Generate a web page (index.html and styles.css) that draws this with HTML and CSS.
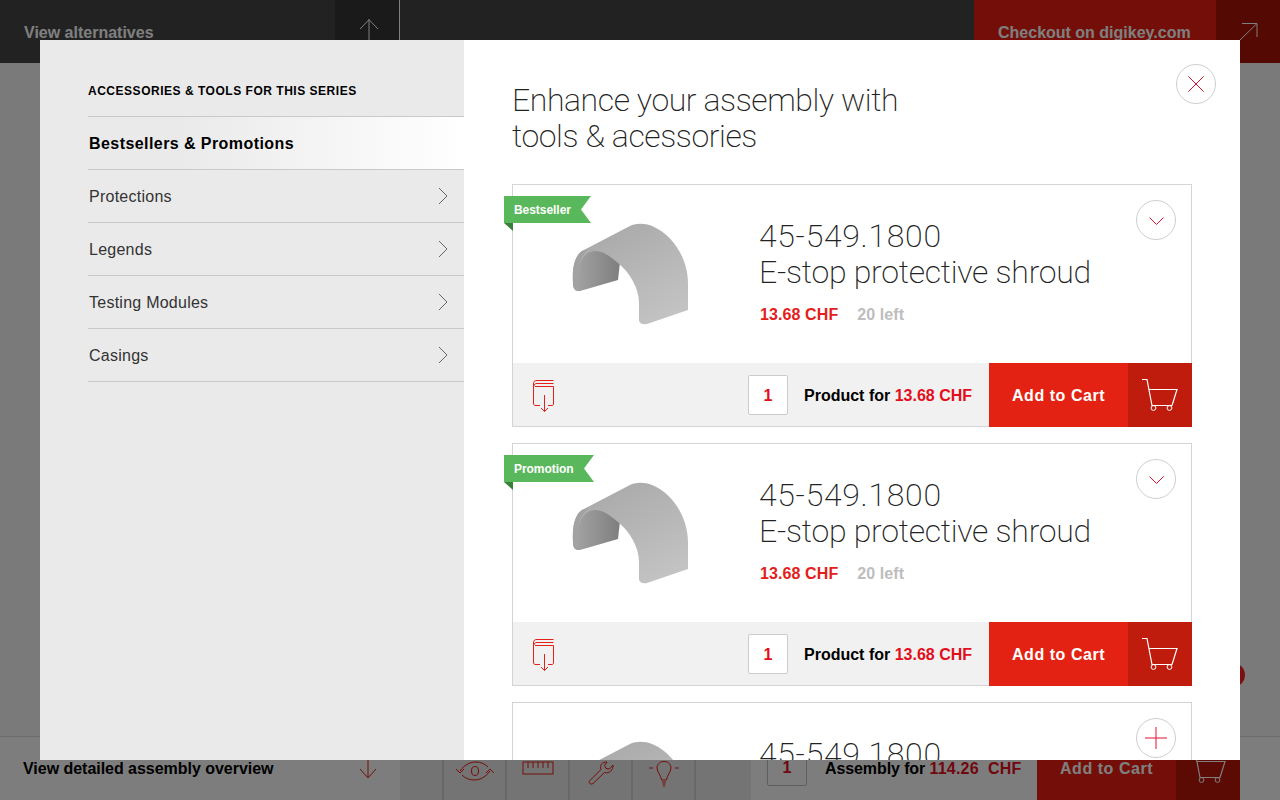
FILE: index.html
```html
<!DOCTYPE html>
<html lang="en">
<head>
<meta charset="utf-8">
<title>Accessories</title>
<link rel="stylesheet" href="styles.css">
</head>
<body>
<svg class="defs" width="0" height="0" aria-hidden="true">
  <defs>
    <linearGradient id="body" x1="0.2" y1="0" x2="0.8" y2="1">
      <stop offset="0" stop-color="#a8a8a8"/><stop offset="1" stop-color="#c4c4c4"/>
    </linearGradient>
    <linearGradient id="inner" x1="0" y1="0" x2="1" y2="0">
      <stop offset="0" stop-color="#a2a2a2"/><stop offset="1" stop-color="#7e7e7e"/>
    </linearGradient>
    <symbol id="shroud" viewBox="0 0 140 125">
      <path fill="url(#inner)" d="M18 81C14 60 20 40 36 38C44 38 52 44 60 52L58 70L20 81Z"/>
      <path fill="url(#body)" d="M13 74C12 56 15 46 22 41L68 17C75 13 84 13 92 16C114 25 128 50 128 73V100L87 114C82 115 79 113 79 110V93C79 78 70 63 58 53C50 46 43 41 35 41C26 41 19 50 18 62V81C15 81 13 78 13 74Z"/>
      <path fill="#a2a2a2" d="M13 74C12 56 15 46 22 41L30 38C24 42 19 50 18 62V81C15 81 13 78 13 74Z"/>
    </symbol>
    <symbol id="cart" viewBox="0 0 38 34">
      <path fill="none" stroke="currentColor" stroke-width="1.200" d="M1 1.500H6L11 27.500H31M7.500 11.500H36L31 27.500"/>
      <circle cx="12.500" cy="30" r="2.400" fill="none" stroke="currentColor"/>
      <circle cx="28.500" cy="30" r="2.400" fill="none" stroke="currentColor"/>
    </symbol>
    <symbol id="book" viewBox="0 0 24 34">
      <path fill="none" stroke="currentColor" stroke-width="1" d="M21.500 0.500H5C2 0.500 1.500 2 1.500 4V23C1.500 25 2 25.500 4 25.500H8M21.500 3.500H5C3 3.500 2 4.500 2 6M21.500 6.500H3M21.500 6.500V24C21.500 25 21 25.500 19 25.500H16M12.500 15V31.500M9 28L12.500 31.500L16 28"/>
    </symbol>
    <symbol id="chev-right" viewBox="0 0 10 18">
      <path fill="none" stroke="currentColor" stroke-width="1" d="M1 1L9 9L1 17"/>
    </symbol>
  </defs>
</svg>

<div class="page">
  <header class="topbar">
    <div class="top-label">View alternatives</div>
    <div class="top-arrow">
      <svg width="20" height="30" viewBox="0 0 20 30"><path fill="none" stroke="#fff" d="M10 0V30M1 10L10 0.700L19 10"/></svg>
    </div>
    <div class="top-gap"></div>
    <div class="checkout">Checkout on digikey.com</div>
    <div class="checkout-arrow">
      <svg width="20" height="20" viewBox="0 0 20 20"><path fill="none" stroke="#fff" d="M1 18L18 1.500M3 1.500H18V15"/></svg>
    </div>
  </header>
  <main class="canvas">
    <span class="canvas-dot"></span>
  </main>
  <footer class="bottombar">
    <div class="bottom-label">View detailed assembly overview</div>
    <div class="bottom-arrow">
      <svg width="18" height="20" viewBox="0 0 18 20"><path fill="none" stroke="#e61c10" d="M9 0V19M1 10L9 19L17 10"/></svg>
    </div>
    <div class="tools">
      <div class="tool tool-blank"></div>
      <div class="tool">
        <svg width="40" height="20" viewBox="0 0 40 20"><g fill="none" stroke="#e61c10"><path d="M5 10C10 3 16 1 21 1C26 1 30 3 33 6M35 10C30 17 24 19 19 19C14 19 10 17 7 14"/><path d="M1 8L5 12L9 8M31 12L35 8L39 12"/><ellipse cx="20" cy="10" rx="3.500" ry="4.500"/></g></svg>
      </div>
      <div class="tool">
        <svg width="32" height="14" viewBox="0 0 32 14"><g fill="none" stroke="#e61c10"><rect x="1" y="1" width="30" height="12"/><path d="M6 1V7M11 1V7M16 1V7M21 1V7M26 1V7"/></g></svg>
      </div>
      <div class="tool">
        <svg width="26" height="24" viewBox="0 0 26 24"><path fill="none" stroke="#e61c10" d="M1.500 20L13 8.500C11.500 4 14 1 19 1L16.500 4.500L18 7.500L21.500 8L25 4C25.500 9 21 13 16.500 11.500L5 22.500C3 24 0 22 1.500 20Z"/></svg>
      </div>
      <div class="tool">
        <svg width="30" height="26" viewBox="0 0 30 26"><path fill="none" stroke="#e61c10" d="M0 7H4M26 7H30M15 0.500C10 0.500 8 4 8 7C8 11 12 14 12.500 19H17.500C18 14 22 11 22 7C22 4 20 0.500 15 0.500ZM13 21H17M13.500 23H16.500M14 25H16"/></svg>
      </div>
      <div class="tool tool-blank"></div>
    </div>
    <div class="bottom-total">
      <div class="qty qty-dim">1</div>
      <div class="total-text">Assembly for <span class="red">114.26&nbsp; CHF</span></div>
    </div>
    <div class="bottom-add">Add to Cart</div>
    <div class="bottom-cart"><svg class="cart-dim" width="38" height="34"><use href="#cart"/></svg></div>
    <div class="bottom-end"></div>
  </footer>
</div>

<div class="scrim"></div>

<section class="modal">
  <aside class="side">
    <h2 class="side-title">ACCESSORIES &amp; TOOLS FOR THIS SERIES</h2>
    <ul class="menu">
      <li class="menu-item active">Bestsellers &amp; Promotions</li>
      <li class="menu-item">Protections<svg class="menu-chev" width="10" height="18"><use href="#chev-right"/></svg></li>
      <li class="menu-item">Legends<svg class="menu-chev" width="10" height="18"><use href="#chev-right"/></svg></li>
      <li class="menu-item">Testing Modules<svg class="menu-chev" width="10" height="18"><use href="#chev-right"/></svg></li>
      <li class="menu-item">Casings<svg class="menu-chev" width="10" height="18"><use href="#chev-right"/></svg></li>
    </ul>
  </aside>
  <div class="content">
    <button class="round close" aria-label="Close">
      <svg width="16" height="16" viewBox="0 0 16 16"><path fill="none" stroke="#e8112d" d="M0.500 0.500L15.500 15.500M15.500 0.500L0.500 15.500"/></svg>
    </button>
    <h1 class="headline">Enhance your assembly with<br>tools &amp; acessories</h1>

    <article class="card">
      <div class="badge">Bestseller</div>
      <span class="fold"></span>
      <button class="round toggle" aria-label="Expand">
        <svg width="16" height="10" viewBox="0 0 16 10"><path fill="none" stroke="#e8112d" d="M1.500 2.500L8.500 9.500L15.500 2.500"/></svg>
      </button>
      <div class="card-main">
        <svg class="shot" width="140" height="125"><use href="#shroud"/></svg>
        <div class="info">
          <div class="title"><span class="part">45-549.1800</span><br><span class="name">E-stop protective shroud</span></div>
          <div class="meta"><span class="price">13.68 CHF</span><span class="stock">20 left</span></div>
        </div>
      </div>
      <div class="card-bar">
        <svg class="book" width="24" height="34"><use href="#book"/></svg>
        <div class="qty">1</div>
        <div class="total-text">Product for <span class="red">13.68 CHF</span></div>
        <div class="add">Add to Cart</div>
        <div class="add-cart"><svg width="38" height="34"><use href="#cart"/></svg></div>
      </div>
    </article>

    <article class="card">
      <div class="badge badge-wide">Promotion</div>
      <span class="fold"></span>
      <button class="round toggle" aria-label="Expand">
        <svg width="16" height="10" viewBox="0 0 16 10"><path fill="none" stroke="#e8112d" d="M1.500 2.500L8.500 9.500L15.500 2.500"/></svg>
      </button>
      <div class="card-main">
        <svg class="shot" width="140" height="125"><use href="#shroud"/></svg>
        <div class="info">
          <div class="title"><span class="part">45-549.1800</span><br><span class="name">E-stop protective shroud</span></div>
          <div class="meta"><span class="price">13.68 CHF</span><span class="stock">20 left</span></div>
        </div>
      </div>
      <div class="card-bar">
        <svg class="book" width="24" height="34"><use href="#book"/></svg>
        <div class="qty">1</div>
        <div class="total-text">Product for <span class="red">13.68 CHF</span></div>
        <div class="add">Add to Cart</div>
        <div class="add-cart"><svg width="38" height="34"><use href="#cart"/></svg></div>
      </div>
    </article>

    <article class="card">
      <button class="round toggle" aria-label="Add">
        <svg width="22" height="22" viewBox="0 0 22 22"><path fill="none" stroke="#e8112d" d="M11 0V22M0 11H22"/></svg>
      </button>
      <div class="card-main">
        <svg class="shot" width="140" height="125"><use href="#shroud"/></svg>
        <div class="info">
          <div class="title"><span class="part">45-549.1800</span><br><span class="name">E-stop protective shroud</span></div>
          <div class="meta"><span class="price">13.68 CHF</span><span class="stock">20 left</span></div>
        </div>
      </div>
    </article>
  </div>
</section>
</body>
</html>
```
FILE: styles.css
```css
* { box-sizing: border-box; }
html, body { margin: 0; height: 100%; overflow: hidden; }
body { font-family: "Liberation Sans", Arial, sans-serif; color: #000; background: #f4f4f4; }
.defs { position: absolute; }
.page { height: 800px; display: flex; flex-direction: column; }

.topbar { height: 63px; display: flex; background: #444; color: #fff; font-weight: 700; font-size: 16px; }
.top-label { width: 335px; padding: 24px 0 0 24px; line-height: 18px; }
.top-arrow { width: 65px; background: #343434; border-right: 1px solid #fff; padding: 19px 0 0 24px; }
.top-gap { flex: 1; }
.checkout { width: 242px; background: #e61c10; padding: 24px 0 0 24px; line-height: 18px; }
.checkout-arrow { width: 64px; background: #a81207; padding: 22px 0 0 23px; }

.canvas { flex: 1; position: relative; }
.canvas-dot { position: absolute; left: 1221px; top: 600px; width: 24px; height: 24px; border-radius: 50%; background: #f82020; }

.bottombar { height: 64px; display: flex; background: #fafafa; border-top: 1px solid #d8d8d8; }
.bottom-label { width: 335px; padding: 23px 0 0 23px; font-weight: 700; font-size: 16px; line-height: 18px; letter-spacing: -.03px; }
.bottom-arrow { width: 65px; padding: 22px 0 0 24px; }
.tools { width: 351px; display: flex; background: #e8e8e8; }
.tool { width: 63px; border-right: 2px solid #d0d0d0; display: flex; justify-content: center; padding-top: 24px; align-items: flex-start; }
.tool:first-child { width: 44px; }
.tool:last-child { width: 54px; border-right: 0; }
.bottom-total { width: 286px; display: flex; align-items: flex-start; padding: 9px 0 0 16px; }
.qty { width: 40px; height: 40px; border: 1px solid #ccc; border-radius: 2px; background: #fff; color: #e30e1c; font-weight: 700; font-size: 16px; line-height: 40px; text-align: center; flex: none; }
.qty-dim { background: transparent; border-color: #bdbdbd; line-height: 42px; }
.total-text { font-weight: 700; font-size: 16px; line-height: 18px; white-space: nowrap; margin: 2px 0 0 16px; }
.bottom-total .total-text { margin: 14px 0 0 18px; letter-spacing: -.1px; }
.bottom-total .red { letter-spacing: .2px; }
.red { color: #e30e1c; }
.bottom-add { width: 139px; background: #e61c10; color: #fff; font-weight: 700; font-size: 16px; letter-spacing: .55px; padding: 23px 0 0 23px; line-height: 18px; }
.bottom-cart { width: 64px; background: #b81408; color: #fff; padding: 13px 0 0 13px; }
.cart-dim { overflow: hidden; }
.bottom-end { flex: 1; }

.scrim { position: absolute; inset: 0; background: rgba(0,0,0,.5); }

.modal { position: absolute; left: 40px; top: 40px; width: 1200px; height: 720px; display: flex; background: #fff; overflow: hidden; }
.side { width: 424px; flex: none; background: #eaeaea; padding: 44px 0 0 48px; }
.side-title { margin: 0 0 18px; font-size: 12px; line-height: 14px; font-weight: 700; letter-spacing: .52px; color: #000; }
.menu { margin: 0; padding: 0; list-style: none; border-top: 1px solid #c9c9c9; }
.menu-item { height: 53px; border-bottom: 1px solid #c9c9c9; padding: 2px 16px 0 1px; display: flex; align-items: center; justify-content: space-between; font-size: 16px; letter-spacing: .25px; color: #333; }
.menu-item.active { font-weight: 700; color: #000; background: linear-gradient(90deg, #eaeaea 25%, #fff 100%); letter-spacing: .43px; }
.menu-chev { color: #666; margin-top: -2px; }

.content { flex: 1; padding: 42px 48px 0; position: relative; min-width: 0; }
.round { position: absolute; width: 40px; height: 40px; padding: 0; border: 1px solid #cfcfcf; border-radius: 50%; background: #fff; display: flex; align-items: center; justify-content: center; }
.close { right: 24px; top: 24px; }
.toggle { right: 15px; top: 15px; }
.headline, .title { font-family: Roboto, "Liberation Sans", sans-serif; font-weight: 200; font-size: 32px; line-height: 36px; color: #222; }
.headline { margin: 0 0 30px; letter-spacing: -.42px; }
.part { letter-spacing: .7px; }
.name { letter-spacing: -.26px; }

.card { position: relative; border: 1px solid #d4d4d4; margin-bottom: 16px; height: 243px; background: #fff; }
.badge { position: absolute; left: -9px; top: 11px; height: 27px; width: 87px; padding-left: 10px; line-height: 28px; font-size: 12px; letter-spacing: -.05px; font-weight: 700; color: #fff; background: #5ab85c; clip-path: polygon(0 0, 100% 0, calc(100% - 10px) 50%, 100% 100%, 0 100%); }
.badge-wide { width: 90px; }
.fold { position: absolute; left: -9px; top: 38px; width: 9px; height: 8px; background: #37803a; clip-path: polygon(0 0, 100% 0, 100% 100%); }
.card-main { height: 178px; display: flex; }
.shot { flex: none; margin: 25px 0 0 47px; filter: blur(.3px); }
.info { padding-top: 33px; margin-left: 59px; }
.meta { margin: 16px 0 0 1px; font-size: 16px; letter-spacing: .1px; line-height: 18px; font-weight: 700; }
.price { color: #e3201a; }
.stock { color: #bdbdbd; margin-left: 19px; }

.card-bar { height: 63px; margin-right: -1px; background: #f1f1f1; display: flex; align-items: center; padding-left: 19px; }
.book { color: #e3201a; flex: none; margin-right: 192px; margin-top: 5px; }
.add { margin-left: auto; width: 139px; align-self: stretch; margin-bottom: -1px; background: #e32213; color: #fff; font-weight: 700; font-size: 16px; letter-spacing: .55px; line-height: 65px; padding-left: 23px; }
.add-cart { width: 64px; align-self: stretch; margin-bottom: -1px; background: #bf1c0e; color: #fff; padding: 15px 0 0 13px; }
```
